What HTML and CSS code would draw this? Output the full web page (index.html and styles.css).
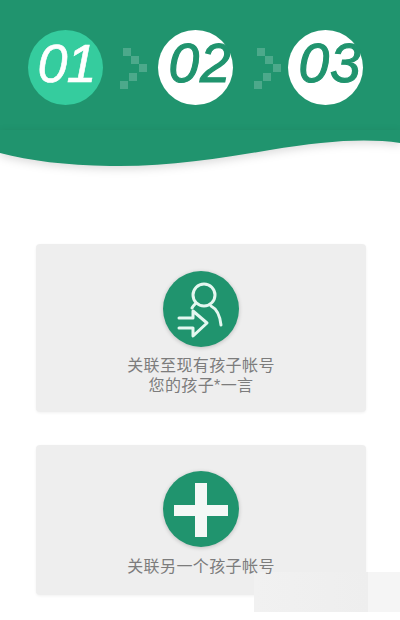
FILE: index.html
```html
<!DOCTYPE html>
<html lang="zh-CN">
<head>
    <meta charset="UTF-8">
    <meta name="viewport" content="width=device-width, initial-scale=1.0">
    <title>关联孩子帐号</title>
    <link rel="stylesheet" href="styles.css">
</head>
<body>
    <!-- Steps header -->
    <header class="header">
        <div class="steps">
            <div class="step step-active"><span class="step-num">01</span></div>
            <svg class="step-arrow" viewBox="0 0 55 75">
                <rect x="20" y="18" width="8" height="8"/>
                <rect x="28" y="26" width="8" height="8"/>
                <rect x="36" y="34" width="8" height="8"/>
                <rect x="26" y="43" width="8" height="8"/>
                <rect x="17" y="51" width="8" height="8"/>
            </svg>
            <div class="step"><span class="step-num">02</span></div>
            <svg class="step-arrow" viewBox="-4 0 55 75">
                <rect x="20" y="18" width="8" height="8"/>
                <rect x="28" y="26" width="8" height="8"/>
                <rect x="36" y="34" width="8" height="8"/>
                <rect x="26" y="43" width="8" height="8"/>
                <rect x="17" y="51" width="8" height="8"/>
            </svg>
            <div class="step"><span class="step-num">03</span></div>
        </div>
    </header>
    <svg class="wave" viewBox="0 0 400 50" preserveAspectRatio="none">
        <path d="M0 0H400V13C365 8 325 11 270 20C215 29 165 37 110 36C65 35 30 31 0 23Z"/>
    </svg>

    <!-- Leftover patch in the corner of the screenshot -->
    <div class="patch"></div>

    <!-- Options -->
    <main class="options">
        <section class="card">
            <div class="card-icon">
                <svg viewBox="0 0 76 76">
                    <g class="icon-line">
                        <circle cx="41" cy="24" r="11"/>
                        <path d="M48 35C54 38 57 45 58 54"/>
                        <path d="M33 32C31 34 30 35 29 37"/>
                        <path d="M16 47H30V40L44 52L30 65V57H16"/>
                    </g>
                </svg>
            </div>
            <p class="card-text">关联至现有孩子帐号<br>您的孩子*一言</p>
        </section>
        <section class="card card-add">
            <div class="card-icon">
                <svg viewBox="0 0 76 76">
                    <rect class="icon-fill" x="32" y="12" width="12" height="54"/>
                    <rect class="icon-fill" x="11" y="34" width="54" height="11"/>
                </svg>
            </div>
            <p class="card-text">关联另一个孩子帐号</p>
        </section>
    </main>
</body>
</html>
```

FILE: styles.css
```css
* {
    margin: 0;
    padding: 0;
    box-sizing: border-box;
}

body {
    width: 400px;
    height: 620px;
    background: #fff;
    overflow: hidden;
    position: relative;
    font-family: "Liberation Sans", "Noto Sans CJK SC", sans-serif;
}

/* Header */
.header {
    height: 130px;
    padding: 30px 0 0 28px;
    background: #20946e;
}

.steps {
    display: flex;
}

.step {
    width: 75px;
    height: 75px;
    border-radius: 50%;
    background: #fff;
    color: #20946e;
    display: flex;
    justify-content: center;
    padding: 3px 0 0 9px;
}

.step-active {
    background: #35cc9e;
    color: #fff;
    padding-left: 2px;
}

.step-num {
    font-size: 55px;
    line-height: 60px;
    font-style: italic;
    letter-spacing: 1px;
    white-space: nowrap;
    -webkit-text-stroke: 1.2px currentColor;
}

.step-active .step-num {
    font-size: 54px;
    letter-spacing: -1px;
    -webkit-text-stroke: 0.6px currentColor;
}

.step-arrow {
    width: 55px;
    height: 75px;
}

.step-arrow rect {
    fill: #fff;
    fill-opacity: 0.2;
}

.wave {
    display: block;
    width: 400px;
    height: 50px;
    filter: drop-shadow(0 3px 4px rgba(0, 0, 0, 0.14));
}

.wave path {
    fill: #20946e;
}

/* Cards */
.options {
    margin: 64px 34px 0 36px;
    display: flex;
    flex-direction: column;
    gap: 33px;
}

.card {
    padding: 27px 0 16px;
    background: #eee;
    border-radius: 4px;
    box-shadow: 0 1px 3px rgba(0, 0, 0, 0.06);
    text-align: center;
}

.card-add {
    padding: 26px 0 18px;
}

.card-icon {
    width: 76px;
    height: 76px;
    margin: 0 auto 9px;
    border-radius: 50%;
    background: #20946e;
    box-shadow: 0 1px 4px rgba(0, 0, 0, 0.2);
}

.card-add .card-icon {
    margin-bottom: 10px;
}

.card-icon svg {
    display: block;
    width: 76px;
    height: 76px;
}

.icon-line {
    fill: none;
    stroke: #e4f7f0;
    stroke-width: 3;
    stroke-linecap: round;
    stroke-linejoin: round;
}

.icon-fill {
    fill: #f4f8f6;
}

/* Keeps the text above the corner patch */
.card-text {
    position: relative;
    font-size: 16px;
    line-height: 20px;
    letter-spacing: 0.4px;
    color: #7c7c7c;
}

.patch {
    position: absolute;
    left: 254px;
    top: 572px;
    width: 146px;
    height: 40px;
    background: linear-gradient(90deg, #f1f1f1 0, #eee 78%, #f5f5f5 78%);
}
```
